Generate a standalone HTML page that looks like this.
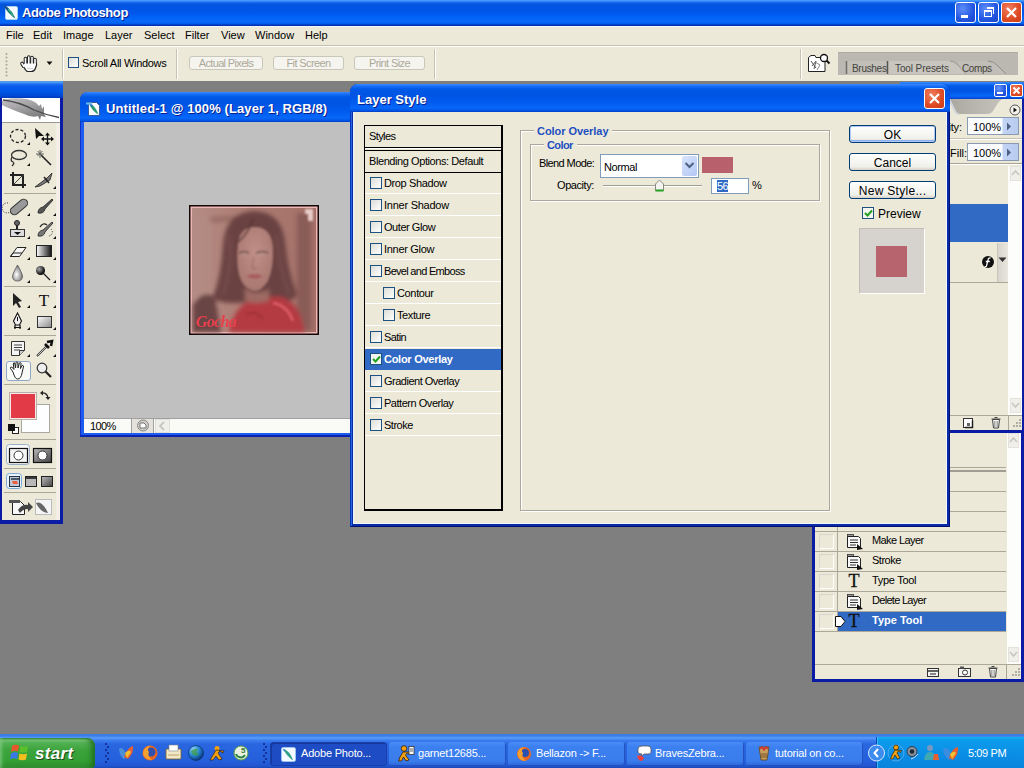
<!DOCTYPE html>
<html><head><meta charset="utf-8">
<style>
*{margin:0;padding:0;box-sizing:border-box}
html,body{width:1024px;height:768px;overflow:hidden;background:#7F7F7F;font-family:"Liberation Sans",sans-serif;font-size:11px;color:#000}
.a{position:absolute}
.t{position:absolute;white-space:nowrap;line-height:13px}
.xpbar{background:linear-gradient(#4AA0FF 0px,#3A90FA 1px,#1A6AEE 2.5px,#0456E0 4px,#0054E3 9px,#0058EE 14px,#0062F8 17px,#0868F8 22px,#0058E8 24px,#0032B0 25px,#0032B0 26px)}
.ttl{position:absolute;white-space:nowrap;color:#fff;font-weight:bold;font-size:13px;text-shadow:1px 1px #0A1E8C;line-height:15px}
.cb{position:absolute;width:12px;height:12px;border:1px solid #1C5180;background:linear-gradient(135deg,#DCDCD7,#FFFFFF)}
.sep{position:absolute;height:1px;background:#ACA899}
.btn{position:absolute;border:1px solid #003C74;border-radius:3px;background:linear-gradient(#FFFFFF,#F0F0EA 80%,#D6D0C5);text-align:center;font-size:12px;line-height:16px;padding-top:1px}
.row{position:absolute;left:365px;width:136px;height:22px;border-bottom:1px solid #FFFFFF}
</style></head><body>

<!-- ============ main title bar ============ -->
<div class="a xpbar" style="left:0;top:0;width:1024px;height:26px"></div>
<div class="ttl" style="left:22px;top:5px;letter-spacing:-0.4px">Adobe Photoshop</div>
<svg class="a" style="left:2px;top:4px" width="17" height="17" viewBox="0 0 17 17">
<rect x="3.5" y="2.5" width="12" height="13" rx="1.5" fill="#F4FAFF" stroke="#A8D0F0"/>
<path d="M1 1 Q6 3 10 8 L13.5 14.5 L11 13 Q5 8 1 1Z" fill="#1A7A6A"/>
<path d="M1 1 Q5 2 7 5 L5 6Z" fill="#1A4A9A"/>
<path d="M6 5 Q9 8 11 12" stroke="#40C090" stroke-width="1" fill="none"/>
</svg>
<div class="a" style="left:955px;top:2px;width:21px;height:21px;border:1px solid #fff;border-radius:3px;background:radial-gradient(circle at 35% 30%,#5E8DF8,#2256E0 60%,#1A45C8)"></div>
<div class="a" style="left:961px;top:15px;width:7px;height:3px;background:#fff"></div>
<div class="a" style="left:978px;top:2px;width:21px;height:21px;border:1px solid #fff;border-radius:3px;background:radial-gradient(circle at 35% 30%,#5E8DF8,#2256E0 60%,#1A45C8)"></div>
<div class="a" style="left:984px;top:10px;width:8px;height:7px;border:1px solid #fff;border-top-width:2px"></div>
<div class="a" style="left:987px;top:7px;width:7px;height:7px;border:1px solid #fff;border-top-width:2px;border-left:none;border-bottom:none"></div>
<div class="a" style="left:1001px;top:2px;width:21px;height:21px;border:1px solid #fff;border-radius:3px;background:radial-gradient(circle at 35% 30%,#F08060,#DD4A22 60%,#C83A18)"></div>
<svg class="a" style="left:1001px;top:2px" width="21" height="21"><path d="M6 6 L15 15 M15 6 L6 15" stroke="#fff" stroke-width="2.2"/></svg>

<!-- ============ menu bar ============ -->
<div class="a" style="left:0;top:26px;width:1024px;height:19px;background:#ECE9D8;border-top:1px solid #F4F4FF"></div>
<div class="a" style="left:0;top:45px;width:1024px;height:1px;background:#C5C2B2"></div>
<div class="t" style="left:6px;top:29px">File</div>
<div class="t" style="left:33px;top:29px">Edit</div>
<div class="t" style="left:63px;top:29px">Image</div>
<div class="t" style="left:105px;top:29px">Layer</div>
<div class="t" style="left:144px;top:29px">Select</div>
<div class="t" style="left:185px;top:29px">Filter</div>
<div class="t" style="left:221px;top:29px">View</div>
<div class="t" style="left:255px;top:29px">Window</div>
<div class="t" style="left:305px;top:29px">Help</div>

<!-- ============ options bar ============ -->
<div class="a" style="left:0;top:46px;width:1024px;height:35px;background:#ECE9D8;border-top:1px solid #FFFFFF"></div>
<!-- grip -->
<svg class="a" style="left:5px;top:52px" width="3" height="26"><g fill="#A8A596"><rect x="0.5" y="1.0" width="2" height="2" rx="1"/><rect x="0.5" y="4.6" width="2" height="2" rx="1"/><rect x="0.5" y="8.2" width="2" height="2" rx="1"/><rect x="0.5" y="11.8" width="2" height="2" rx="1"/><rect x="0.5" y="15.4" width="2" height="2" rx="1"/><rect x="0.5" y="19.0" width="2" height="2" rx="1"/><rect x="0.5" y="22.6" width="2" height="2" rx="1"/></g></svg>
<!-- hand icon -->
<svg class="a" style="left:19px;top:53px" width="21" height="20" viewBox="0 0 21 20">
<g stroke="#222" stroke-linecap="round" fill="none" stroke-width="3.6">
<path d="M6.5 11 L6.5 5.5"/><path d="M9.8 10 L9.8 4"/><path d="M13 10 L13 4.5"/><path d="M16 11 L16 6.5"/><path d="M4.5 13 L3 10.5"/>
</g>
<path d="M4 12 Q4.5 10 6 10 L16.5 10 Q17.8 10 17.5 12 L16.5 15 Q15.5 18.5 12 18.5 L9 18.5 Q6.5 18.5 4 12Z" fill="#FFF" stroke="#222" stroke-width="1.2"/>
<g stroke="#FFF" stroke-linecap="round" fill="none" stroke-width="1.6">
<path d="M6.5 11.5 L6.5 5.5"/><path d="M9.8 11 L9.8 4"/><path d="M13 11 L13 4.5"/><path d="M16 11.5 L16 6.5"/><path d="M5 13.5 L3 10.5"/>
</g>
<path d="M8 15 Q11 17 14 15" stroke="#C8C8C8" fill="none" stroke-width="1"/>
</svg>
<svg class="a" style="left:46px;top:61px" width="8" height="5"><path d="M0.5 0.5 L6.5 0.5 L3.5 4Z" fill="#111"/></svg>
<!-- separators -->
<div class="a" style="left:62px;top:49px;width:1px;height:30px;background:#C5C2B2"></div>
<div class="a" style="left:63px;top:49px;width:1px;height:30px;background:#FFFFFF"></div>
<div class="cb" style="left:68px;top:57px;width:11px;height:11px;border-color:#1C5180;background:linear-gradient(135deg,#DCDCD7,#FFFFFF)"></div>
<div class="t" style="left:82px;top:57px;letter-spacing:-0.3px">Scroll All Windows</div>
<div class="a" style="left:176px;top:49px;width:1px;height:30px;background:#C5C2B2"></div>
<div class="a" style="left:177px;top:49px;width:1px;height:30px;background:#FFFFFF"></div>
<div class="a t" style="left:189px;top:56px;width:74px;height:14px;border:1px solid #C9C7BA;border-radius:3px;background:#F5F4EE;color:#ACA899;text-align:center;line-height:12px;letter-spacing:-0.65px">Actual Pixels</div>
<div class="a t" style="left:273px;top:56px;width:71px;height:14px;border:1px solid #C9C7BA;border-radius:3px;background:#F5F4EE;color:#ACA899;text-align:center;line-height:12px;letter-spacing:-0.6px">Fit Screen</div>
<div class="a t" style="left:354px;top:56px;width:71px;height:14px;border:1px solid #C9C7BA;border-radius:3px;background:#F5F4EE;color:#ACA899;text-align:center;line-height:12px;letter-spacing:-0.6px">Print Size</div>
<div class="a" style="left:434px;top:49px;width:1px;height:30px;background:#C5C2B2"></div>
<div class="a" style="left:435px;top:49px;width:1px;height:30px;background:#FFFFFF"></div>
<div class="a" style="left:800px;top:49px;width:1px;height:30px;background:#C5C2B2"></div>
<div class="a" style="left:801px;top:49px;width:1px;height:30px;background:#FFFFFF"></div>
<!-- file browser icon -->
<svg class="a" style="left:807px;top:52px" width="24" height="22" viewBox="0 0 24 22">
<path d="M1.5 5.5 L4 3.5 L8 3.5 L9 5.5 L18 5.5 L18 19.5 L1.5 19.5Z" fill="#FFF" stroke="#222"/>
<path d="M4 9 L9 16 M5 14 L9 9 L7 17" stroke="#555" fill="none"/><path d="M8 10 L13 13 L10 18" stroke="#888" fill="none"/>
<circle cx="17" cy="6" r="3.5" fill="#fff" stroke="#111" stroke-width="1.3"/><path d="M19.5 8.5 L22.5 11.5" stroke="#111" stroke-width="2"/>
</svg>
<!-- palette well -->
<div class="a" style="left:838px;top:52px;width:180px;height:23px;background:#BAB8B0;border-top:1px solid #AEACA4"></div>
<svg class="a" style="left:838px;top:52px" width="180" height="23" viewBox="0 0 180 23">
<path d="M8 9 L50 9 L50 23 L8 23Z" fill="#C2C0B8"/>
<path d="M8.5 9 L8.5 22" stroke="#6E6C66" stroke-width="1.5"/>
<path d="M120 9 L150 9 Q156 9 160 14 L168 22 L120 22Z" fill="#C0BEB6"/>
<path d="M150 9 Q156 9 160 14 L168 22" stroke="#8E8C86" fill="none"/>
<path d="M50 9 L112 9 Q116 9 120 13 L128 22 L50 22Z" fill="#C8C6BE"/>
<path d="M112 9 Q116 9 120 13 L128 22" stroke="#9A9890" fill="none"/>
<path d="M49.5 9 L49.5 22" stroke="#55534E" stroke-width="1.5"/>
</svg>
<div class="t" style="left:852px;top:62px;color:#45433E;font-size:10px;letter-spacing:-0.3px">Brushes</div>
<div class="t" style="left:895px;top:62px;color:#45433E;font-size:10px;letter-spacing:-0.1px">Tool Presets</div>
<div class="t" style="left:962px;top:62px;color:#45433E;font-size:10px;letter-spacing:-0.4px">Comps</div>

<!-- ============ workspace ============ -->

<!-- ============ toolbox ============ -->
<div class="a" style="left:0;top:81px;width:63px;height:443px;background:#0A1CA4"></div>
<div class="a" style="left:0;top:81px;width:63px;height:17px;background:linear-gradient(#4A8AD0 0px,#58A8FA 1px,#2A7AF4 2.5px,#0A5AEC 5px,#0058E8 10px,#0048D4 15px,#0038B8 17px)"></div>
<div class="a" style="left:2px;top:98px;width:58px;height:422px;background:#ECE9D8"></div>
<div class="a" style="left:2px;top:98px;width:58px;height:24px;background:#FFFFFF"></div>
<svg class="a" style="left:2px;top:98px" width="58" height="25" viewBox="0 0 58 25">
<defs><linearGradient id="fth" x1="0" y1="0" x2="0.6" y2="1"><stop offset="0" stop-color="#C4C4C8"/><stop offset="0.6" stop-color="#9A9A9C"/><stop offset="1" stop-color="#7A7A7C"/></linearGradient></defs>
<path d="M0 3 Q4 -0.5 20 0.5 Q32 1 37 8 L39 6 L40 11 L42 8 L42 16 L44 19 L39 18 L38 22 L36 18 Q30 20 22 16 Q8 11 0 7Z" fill="url(#fth)"/>
<path d="M1 2 Q18 4 32 12 Q44 17 57 19.5" stroke="#4A4A4C" stroke-width="1.3" fill="none"/>
<path d="M4 4 Q10 6 14 9" stroke="#B8A8B8" stroke-width="1.5" fill="none" opacity="0.6"/>
</svg>
<div class="a" style="left:2px;top:122px;width:58px;height:1px;background:#9C9A90"></div>
<div class="a" style="left:56px;top:123px;width:4px;height:397px;background:#F2F0E6"></div>
<div class="sep" style="left:4px;top:193px;width:52px"></div>
<div class="sep" style="left:4px;top:286px;width:52px"></div>
<div class="sep" style="left:4px;top:335px;width:52px"></div>
<div class="sep" style="left:4px;top:384px;width:52px"></div>
<div class="sep" style="left:4px;top:439px;width:52px"></div>
<div class="sep" style="left:4px;top:468px;width:52px"></div>
<div class="sep" style="left:4px;top:492px;width:52px"></div>
<!-- selected hand button -->
<div class="a" style="left:6px;top:361px;width:25px;height:20px;border:1px solid #8FA8C8;border-radius:3px;background:#F8F8F4"></div>
<svg class="a" style="left:0;top:123px" width="60" height="400" viewBox="0 123 60 400">
<g fill="#111">
<path d="M27 145 h3 v-3z"/><path d="M27 166 h3 v-3z"/><path d="M53 189 h3 v-3z"/>
<path d="M27 216 h3 v-3z"/><path d="M53 216 h3 v-3z"/><path d="M27 239 h3 v-3z"/><path d="M53 239 h3 v-3z"/>
<path d="M27 260 h3 v-3z"/><path d="M53 260 h3 v-3z"/><path d="M27 283 h3 v-3z"/><path d="M53 283 h3 v-3z"/>
<path d="M27 308 h3 v-3z"/><path d="M53 308 h3 v-3z"/><path d="M27 330 h3 v-3z"/><path d="M53 330 h3 v-3z"/>
<path d="M27 357 h3 v-3z"/><path d="M53 357 h3 v-3z"/>
</g>
<!-- marquee -->
<ellipse cx="18" cy="136" rx="7.5" ry="6.5" fill="none" stroke="#222" stroke-width="1.3" stroke-dasharray="3 2"/>
<!-- move -->
<path d="M35 128 L44 136 L39 136 L36 139Z" fill="#111"/>
<path d="M47.5 135 v8 M43.5 139 h8" stroke="#111" stroke-width="1.3"/>
<path d="M47.5 132.5 l-2.5 3h5z M47.5 145.5 l-2.5 -3h5z M41 139 l3 -2.5v5z M54 139 l-3 -2.5v5z" fill="#111"/>
<!-- lasso -->
<ellipse cx="19" cy="155" rx="7.5" ry="4.5" fill="none" stroke="#333" stroke-width="1.3"/>
<path d="M12 157 Q10 161 13 162 Q15 163 12 166" stroke="#333" stroke-width="1.3" fill="none"/>
<!-- magic wand -->
<path d="M41 155 L51 165" stroke="#222" stroke-width="1.6"/>
<path d="M40 150 v8 M36 154 h8 M37.5 151 l5 5 M42.5 151 l-5 5" stroke="#555" stroke-width="0.9"/>
<!-- crop -->
<path d="M13 172 v13 h13 M10 175 h13 v13" stroke="#222" stroke-width="2" fill="none"/>
<path d="M14 184 L24 174" stroke="#444" stroke-width="1"/>
<!-- slice -->
<path d="M35 187 L47 178 L52 173 L50 180 L40 186Z" fill="#777" stroke="#222" stroke-width="0.8"/>
<path d="M44 177 L49 183" stroke="#222" stroke-width="1.5"/>
<!-- healing -->
<rect x="9" y="203" width="20" height="8" rx="4" transform="rotate(-40 19 207)" fill="#999" stroke="#333"/>
<path d="M8 203 a5 5 0 1 0 2 9" stroke="#222" stroke-dasharray="1 1.5" fill="none"/>
<!-- brush -->
<path d="M38 213 Q38 208 43 207 L52 199 L53 200 L45 209 Q44 214 38 213Z" fill="#555" stroke="#222" stroke-width="0.8"/>
<!-- stamp -->
<circle cx="17" cy="223" r="2.5" fill="#666" stroke="#222"/><path d="M17 225 v4" stroke="#222" stroke-width="2"/>
<rect x="10.5" y="229.5" width="14" height="7" fill="#DDD" stroke="#333"/><path d="M14 232 h7 l-3.5 3z" fill="#111"/>
<!-- history brush -->
<path d="M38 236 Q38 231 43 230 L52 222 L53 223 L45 232 Q44 237 38 236Z" fill="#777" stroke="#222" stroke-width="0.8"/>
<path d="M40 227 Q43 222 47 225" stroke="#222" stroke-width="1.3" fill="none"/>
<path d="M51 229 a4 4 0 0 1 -3 7" stroke="#222" stroke-dasharray="1 1.5" fill="none"/>
<!-- eraser -->
<path d="M10.5 256.5 L17 247.5 L26 247.5 L19.5 256.5Z" fill="#F8F8F8" stroke="#222"/>
<path d="M10.5 256.5 L13 253 L22 253" stroke="#222" fill="none"/>
<!-- gradient -->
<defs><linearGradient id="gr" x1="0" x2="1"><stop offset="0" stop-color="#fff"/><stop offset="1" stop-color="#111"/></linearGradient>
<radialGradient id="drop" cx="0.4" cy="0.6" r="0.6"><stop offset="0" stop-color="#fff"/><stop offset="1" stop-color="#777"/></radialGradient>
<radialGradient id="ball" cx="0.35" cy="0.35" r="0.65"><stop offset="0" stop-color="#aaa"/><stop offset="1" stop-color="#000"/></radialGradient>
<linearGradient id="rg" x1="0" y1="0" x2="1" y2="1"><stop offset="0" stop-color="#fff"/><stop offset="1" stop-color="#888"/></linearGradient>
<linearGradient id="qm" x1="0" y1="0" x2="1" y2="1"><stop offset="0" stop-color="#BBB"/><stop offset="1" stop-color="#444"/></linearGradient>
</defs>
<rect x="36.5" y="245.5" width="15" height="11" fill="url(#gr)" stroke="#222"/>
<!-- blur drop -->
<path d="M17.5 265 Q13 273 12.5 276 Q12.5 281 17.5 281 Q22.5 281 22.5 276 Q22 273 17.5 265Z" fill="url(#drop)" stroke="#555" stroke-width="0.8"/>
<!-- dodge/burn -->
<circle cx="40.5" cy="270.5" r="4.5" fill="url(#ball)"/><path d="M43 273 L50 280" stroke="#222" stroke-width="1.3"/>
<!-- path select -->
<path d="M13 293 L13 306 L16 303 L19 308 L21 307 L18 302 L22 301Z" fill="#222"/>
<!-- type -->
<text x="44" y="306" font-family="Liberation Serif" font-size="17" text-anchor="middle" fill="#111">T</text>
<!-- pen -->
<path d="M17.5 313 L21.5 321 L19.5 325 L15.5 325 L13.5 321Z" fill="#F0F0F0" stroke="#111" stroke-width="1.1"/><path d="M17.5 317 v4" stroke="#111"/><path d="M15 325 v4 M20 325 v4 M14 327.5 h7" stroke="#111" stroke-width="1.2"/>
<!-- rectangle -->
<rect x="37.5" y="316.5" width="14" height="11" fill="url(#rg)" stroke="#333"/>
<!-- notes -->
<path d="M11.5 341.5 h13 v9 l-5 5 h-8Z" fill="#F4F4F4" stroke="#333"/><path d="M14 345 h8 M14 347.5 h8 M14 350 h6" stroke="#444"/><path d="M19.5 355.5 v-5 h5" fill="#ccc" stroke="#333"/>
<!-- eyedropper -->
<path d="M37 356 L47 346" stroke="#333" stroke-width="2"/><path d="M37.5 355.5 L46 347" stroke="#fff" stroke-width="0.7"/>
<path d="M45 344 L49 348 M47 342 L52 341 L51 346" stroke="#111" stroke-width="2.5" fill="none"/>
<!-- hand -->
<path d="M13 372 L10.5 368.5 Q10 366.8 11.8 367 L14 369.5 L13.3 364 Q13.3 362.6 14.6 362.8 L15.6 368 L16 362.4 Q16.7 361.2 17.8 362.4 L18 368 L19.3 363 Q20.3 362.2 21.1 363.2 L20.4 368.6 L22 365.5 Q23 364.9 23.6 366 L22 373 Q21 379 17.5 379 Q15 379 13 372Z" fill="#FFF" stroke="#222"/>
<!-- zoom -->
<circle cx="42" cy="368" r="4.8" fill="#EEE" stroke="#333" stroke-width="1.2"/><path d="M45.5 371.5 L51 377" stroke="#222" stroke-width="2.2"/>
<!-- colors -->
<rect x="21.5" y="404.5" width="28" height="28" fill="#FDFEFF" stroke="#A8A8A0"/>
<rect x="9.5" y="392.5" width="27" height="27" fill="#F8E8E8" stroke="#B8B0A8"/>
<rect x="11" y="394" width="24" height="24" fill="#E33A48"/>
<path d="M41 393 Q47 392 48 398" stroke="#222" stroke-width="1.3" fill="none"/><path d="M40 393 l3 -2.5v5z M48 400 l-2.5 -3h5z" fill="#222"/>
<rect x="12.5" y="427.5" width="6" height="6" fill="#fff" stroke="#222"/><rect x="8" y="424" width="7" height="7" fill="#111"/>
<!-- quick mask -->
<rect x="6.5" y="444.5" width="23" height="20" rx="3" fill="#F8F8F8" stroke="#9AB0C8"/>
<rect x="9.5" y="448.5" width="18" height="14" fill="#F4F4F4" stroke="#111" stroke-width="1.2"/><circle cx="18.5" cy="455.5" r="4.5" fill="#fff" stroke="#333"/>
<rect x="33.5" y="448.5" width="18" height="14" fill="url(#qm)" stroke="#111" stroke-width="1.2"/><circle cx="42.5" cy="455.5" r="4.5" fill="#fff" stroke="#333"/>
<!-- screen modes -->
<rect x="6.5" y="473.5" width="15" height="15" rx="3" fill="#EAF2FA" stroke="#7AA8D8"/>
<rect x="9.5" y="476.5" width="10" height="10" fill="#C0C8D8" stroke="#234"/><path d="M11 479 h8" stroke="#234" stroke-width="1.5"/><path d="M12 481 h5 l1 3 h-5z" fill="#E86040"/>
<rect x="25.5" y="476.5" width="11" height="10" fill="#B8B8B8" stroke="#222"/><path d="M26 478 h10" stroke="#111" stroke-width="1.5"/>
<rect x="41.5" y="476.5" width="11" height="10" fill="url(#qm)" stroke="#222"/>
<!-- jump -->
<path d="M12.5 501.5 h8 l4 4 v9 h-12Z" fill="#F8F8F8" stroke="#222"/><rect x="9" y="500" width="11" height="3" fill="#555"/>
<path d="M18 510 Q22 504 28 505 L28 502 L33 507 L28 512 L28 509 Q23 509 20 513Z" fill="#444"/>
<rect x="35.5" y="499.5" width="16" height="15" fill="#F4F4F4" stroke="#BBB"/>
<path d="M36 503 Q42 500 48 513 Q40 512 36 503Z" fill="#666"/>
</svg>

<!-- ============ document window ============ -->
<div class="a" style="left:80px;top:92px;width:275px;height:345px;border-radius:8px 8px 0 0;background:#1E5CF0;border-left:1px solid #1030C8;border-bottom:2px solid #0A24B0"></div>
<div class="a" style="left:80px;top:92px;width:275px;height:30px;border-radius:8px 8px 0 0;background:linear-gradient(#3A8CFF 0px,#1A70F8 2px,#0058E6 5px,#0054E3 12px,#005CF0 20px,#0868F8 26px,#0050E0 29px,#0038C0 30px)"></div>
<div class="a" style="left:84px;top:122px;width:271px;height:296px;background:#C0C0C0"></div>
<div class="a" style="left:84px;top:418px;width:271px;height:15px;background:#FAFAF6;border-top:1px solid #A0A0A0"></div>
<div class="a" style="left:131px;top:418px;width:23px;height:15px;background:#E4E2DA;border-left:1px solid #A0A0A0;border-right:1px solid #A0A0A0;border-top:1px solid #A0A0A0"></div>
<svg class="a" style="left:136px;top:419px" width="14" height="13"><circle cx="7" cy="6.5" r="5.5" fill="#D0D0C8" stroke="#888"/><path d="M4 4 h4 l2 2 v3 h-6z" fill="#fff" stroke="#555" stroke-width="0.8"/></svg>
<div class="a" style="left:155px;top:419px;width:15px;height:14px;background:#F0F0EA;border:1px solid #E0E0D8"></div>
<svg class="a" style="left:158px;top:421px" width="9" height="10"><path d="M6 1 L2 5 L6 9" stroke="#C8C8C0" stroke-width="2" fill="none"/></svg>
<div class="t" style="left:90px;top:420px;letter-spacing:-0.6px">100%</div>
<div class="ttl" style="left:106px;top:101px;letter-spacing:0.1px">Untitled-1 @ 100% (Layer 1, RGB/8)</div>
<svg class="a" style="left:86px;top:100px" width="16" height="16" viewBox="0 0 16 16">
<path d="M2.5 2.5 h8 l3 3 v10 h-11z" fill="#F8FCFF" stroke="#2A4A80" stroke-width="0.8"/>
<path d="M3 3 Q8 5 11 11 L12.5 14.5 L10 13 Q5 9 3 3Z" fill="#2A9A70"/><path d="M3 3 Q6 4 7 6 L5 7Z" fill="#2A78C8"/>
<path d="M0 3.5 h6" stroke="#6AB8F0" stroke-width="2"/>
</svg>
<!-- photo -->
<svg class="a" style="left:189px;top:205px" width="130" height="130" viewBox="0 0 130 130">
<defs>
<filter id="bl" x="-20%" y="-20%" width="140%" height="140%"><feGaussianBlur stdDeviation="2"/></filter>
<filter id="bl2" x="-20%" y="-20%" width="140%" height="140%"><feGaussianBlur stdDeviation="0.9"/></filter>
<linearGradient id="bgp" x1="0" x2="1"><stop offset="0" stop-color="#B48C84"/><stop offset="0.45" stop-color="#AC7C72"/><stop offset="1" stop-color="#A47068"/></linearGradient>
<radialGradient id="face" cx="0.5" cy="0.4" r="0.6"><stop offset="0" stop-color="#C09088"/><stop offset="1" stop-color="#A87870"/></radialGradient>
</defs>
<rect x="0" y="0" width="130" height="130" fill="#140808"/>
<rect x="1.5" y="1.5" width="127" height="127" fill="#F0B8B8"/>
<rect x="3" y="3" width="124" height="124" fill="url(#bgp)"/>
<g filter="url(#bl)">
<path d="M8 10 v110 M14 10 v110 M20 10 v110" stroke="#B89890" stroke-width="2" opacity="0.5"/>
<path d="M108 8 L122 8 L122 125 L108 125Z" fill="#8A5C56"/>
<path d="M20 12 L55 10 L45 16 L22 18Z" fill="#8A6058" opacity="0.6"/>
<path d="M34 40 Q36 8 64 6 Q92 6 96 36 Q98 62 108 90 Q100 100 88 96 L46 98 Q28 98 24 92 Q32 72 34 40Z" fill="#6A4242"/><path d="M40 30 Q44 60 34 90 M88 30 Q90 60 100 90" stroke="#805454" stroke-width="3" fill="none" opacity="0.6"/>
<path d="M4 100 Q14 84 26 92 L32 127 L4 127Z" fill="#6A4444"/>
<path d="M40 127 Q44 104 60 96 Q78 90 92 92 Q106 96 112 112 L116 127Z" fill="#B43A42"/>
<path d="M56 82 Q66 92 80 84 L80 96 Q66 100 56 96Z" fill="#9E6A64"/>
</g>
<g filter="url(#bl2)">
<path d="M49 38 Q51 22 66 22 Q82 22 84 42 Q85 62 79 76 Q72 87 65 86 Q54 84 50 70 Q47 56 49 38Z" fill="url(#face)"/>
<path d="M50 48 Q55 45 60 48 M67 48 Q73 45 79 48" stroke="#6E4A48" stroke-width="1.6" fill="none"/>
<path d="M52 50 Q55 51 58 50 M69 50 Q73 51 77 50" stroke="#B89C98" stroke-width="0.8" fill="none"/>
<path d="M65 52 L63 63 Q65 65 68 63" stroke="#946460" stroke-width="1" fill="none"/>
<path d="M57 71 Q65 67 74 71 Q66 77 57 71Z" fill="#A85C5A"/>
<path d="M64 14 Q60 28 48 38" stroke="#553434" stroke-width="2" fill="none" opacity="0.7"/>
<path d="M84 98 Q98 100 104 116" stroke="#D85A62" stroke-width="3" fill="none"/>
<path d="M58 110 Q66 104 74 114" stroke="#A03038" stroke-width="2.5" fill="none" opacity="0.7"/>
<path d="M116 4 L124 4 L124 16 L119 16 L119 9 L116 9Z" fill="#E8CCC8"/>
</g>
<text x="7" y="122" font-family="Liberation Serif" font-style="italic" font-weight="bold" font-size="17" fill="#E8404C" letter-spacing="-0.8" transform="translate(7 0) scale(0.95 1) translate(-7 0)">Gocha</text>
</svg>

<!-- ============ layers panel (behind dialog) ============ -->
<div class="a" style="left:900px;top:82px;width:124px;height:351px;background:#0A1CA4"></div>
<div class="a" style="left:900px;top:82px;width:124px;height:17px;background:linear-gradient(#3A8CFF 0px,#1A70F8 2px,#0058E6 4px,#0054E3 9px,#0868F8 14px,#0050E0 16px,#0040C8 17px)"></div>
<div class="a" style="left:903px;top:99px;width:119px;height:331px;background:#ECE9D8"></div>
<div class="a" style="left:994px;top:84px;width:13px;height:13px;border:1px solid #fff;border-radius:2px;background:radial-gradient(circle at 35% 30%,#6A98FA,#2256E0 60%,#1A45C8)"></div>
<div class="a" style="left:997px;top:92px;width:6px;height:2px;background:#fff"></div>
<div class="a" style="left:1010px;top:84px;width:13px;height:13px;border:1px solid #fff;border-radius:2px;background:radial-gradient(circle at 35% 30%,#F08060,#DD4A22 60%,#C83A18)"></div>
<svg class="a" style="left:1010px;top:84px" width="13" height="13"><path d="M3.5 3.5 L9.5 9.5 M9.5 3.5 L3.5 9.5" stroke="#fff" stroke-width="1.8"/></svg>
<!-- tab strip -->
<div class="a" style="left:903px;top:99px;width:119px;height:17px;background:#ECE9D8"></div>
<svg class="a" style="left:903px;top:99px" width="119" height="17" viewBox="0 0 119 17">
<defs><linearGradient id="tabg" x1="0" x2="1"><stop offset="0" stop-color="#A8A69E"/><stop offset="0.6" stop-color="#BAB8B0"/><stop offset="1" stop-color="#C4C2BA"/></linearGradient></defs>
<path d="M44 0 L100 0 Q97 1 95 4 L90 12 Q88 15 84 15 L56 15 Q53 15 52 12 L48 3 Q47 0 44 0Z" fill="url(#tabg)"/>
<path d="M46 0 L52 12 Q53 15 56 15" stroke="#D0D4DC" stroke-width="2" fill="none"/>
</svg>
<svg class="a" style="left:1009px;top:104px" width="12" height="12"><circle cx="6" cy="6" r="5" fill="#F4F2EA" stroke="#555"/><path d="M4.5 3.5 L8 6 L4.5 8.5Z" fill="#111"/></svg>
<div class="t" style="left:923px;top:121px;letter-spacing:-0.2px">Opacity:</div>
<div class="a" style="left:967px;top:117px;width:52px;height:18px;border:1px solid #8A9AB0;background:linear-gradient(90deg,#FBFCFF 0,#FBFCFF 34px,#C4D4F4 35px,#B8CCF0 100%)"></div>
<div class="t" style="left:973px;top:121px">100%</div>
<svg class="a" style="left:1006px;top:122px" width="6" height="9"><path d="M1 0.5 L5 4.5 L1 8.5Z" fill="#4D6185"/></svg>
<div class="a" style="left:903px;top:138px;width:119px;height:1px;background:#C5C2B2"></div>
<div class="a" style="left:903px;top:139px;width:119px;height:1px;background:#FFF"></div>
<div class="t" style="left:950px;top:147px">Fill:</div>
<div class="a" style="left:967px;top:143px;width:52px;height:18px;border:1px solid #8A9AB0;background:linear-gradient(90deg,#FBFCFF 0,#FBFCFF 34px,#C4D4F4 35px,#B8CCF0 100%)"></div>
<div class="t" style="left:973px;top:147px">100%</div>
<svg class="a" style="left:1006px;top:148px" width="6" height="9"><path d="M1 0.5 L5 4.5 L1 8.5Z" fill="#4D6185"/></svg>
<div class="a" style="left:903px;top:163px;width:119px;height:1px;background:#A8A598"></div>
<div class="a" style="left:903px;top:164px;width:119px;height:1px;background:#FFF"></div>
<!-- scrollbar -->
<div class="a" style="left:1008px;top:166px;width:14px;height:249px;background:#FDFDFB"></div>
<div class="a" style="left:1010px;top:166px;width:11px;height:15px;background:#F0EFEA;border:1px solid #E4E2DA"></div>
<svg class="a" style="left:1011px;top:169px" width="9" height="8"><path d="M1 6 L4.5 2 L8 6" stroke="#C8C6BE" stroke-width="1.6" fill="none"/></svg>
<div class="a" style="left:1010px;top:398px;width:11px;height:15px;background:#F0EFEA;border:1px solid #E4E2DA"></div>
<svg class="a" style="left:1011px;top:401px" width="9" height="8"><path d="M1 2 L4.5 6 L8 2" stroke="#C8C6BE" stroke-width="1.6" fill="none"/></svg>
<div class="a" style="left:903px;top:204px;width:105px;height:38px;background:#316AC5"></div>
<div class="a" style="left:903px;top:282px;width:105px;height:1px;background:#ACA899"></div>
<div class="a" style="left:997px;top:243px;width:11px;height:39px;background:linear-gradient(90deg,#D8D6CC,#E8E6DE);border-left:1px solid #C8C6BC"></div>
<svg class="a" style="left:998px;top:257px" width="9" height="6"><path d="M0.5 0.5 L8.5 0.5 L4.5 5Z" fill="#333"/></svg>
<svg class="a" style="left:981px;top:255px" width="14" height="14"><circle cx="7" cy="7" r="6" fill="#111"/><path d="M9.5 3 Q7.5 2.5 7 5 L5.5 11 Q5 12 3.5 11.5 M4.8 6.5 h4" stroke="#fff" stroke-width="1.3" fill="none"/></svg>
<!-- bottom toolbar -->
<div class="a" style="left:903px;top:415px;width:119px;height:1px;background:#ACA899"></div>
<div class="a" style="left:1008px;top:416px;width:1px;height:14px;background:#ACA899"></div>
<svg class="a" style="left:962px;top:417px" width="13" height="12"><rect x="1.5" y="1.5" width="9" height="9" fill="#fff" stroke="#333"/><path d="M3 10.5 h7.5 v-7" stroke="#222" stroke-width="1.5" fill="none"/><rect x="5" y="6" width="3" height="3" fill="#666"/></svg>
<svg class="a" style="left:990px;top:416px" width="12" height="13"><path d="M2.5 3.5 h7 l-1 8.5 h-5z" fill="#F4F4F0" stroke="#444"/><path d="M1.5 3 h9 M4.5 1.5 h3" stroke="#444"/><path d="M4.5 5 v6 M6 5 v6 M7.5 5 v6" stroke="#888" stroke-width="0.7"/></svg>
<svg class="a" style="left:1011px;top:418px" width="11" height="11"><g fill="#B0AEA4"><rect x="8" y="1" width="2" height="2"/><rect x="5" y="4" width="2" height="2"/><rect x="8" y="4" width="2" height="2"/><rect x="2" y="7" width="2" height="2"/><rect x="5" y="7" width="2" height="2"/><rect x="8" y="7" width="2" height="2"/></g></svg>

<!-- ============ history panel (behind dialog) ============ -->
<div class="a" style="left:812px;top:430px;width:212px;height:252px;background:#0A1CA4"></div>
<div class="a" style="left:815px;top:433px;width:206px;height:246px;background:#ECE9D8"></div>
<div class="a" style="left:1007px;top:433px;width:14px;height:232px;background:#FDFDFB"></div>
<div class="a" style="left:1008px;top:433px;width:11px;height:15px;background:#F0EFEA;border:1px solid #E4E2DA"></div>
<svg class="a" style="left:1009px;top:436px" width="9" height="8"><path d="M1 6 L4.5 2 L8 6" stroke="#C8C6BE" stroke-width="1.6" fill="none"/></svg>
<div class="a" style="left:1008px;top:647px;width:11px;height:15px;background:#F0EFEA;border:1px solid #E4E2DA"></div>
<svg class="a" style="left:1009px;top:650px" width="9" height="8"><path d="M1 2 L4.5 6 L8 2" stroke="#C8C6BE" stroke-width="1.6" fill="none"/></svg>
<div class="a" style="left:815px;top:467px;width:191px;height:1px;background:#ACA899"></div>
<div class="a" style="left:815px;top:470px;width:191px;height:2px;background:#A09E94"></div>
<div class="a" style="left:815px;top:491px;width:191px;height:1px;background:#ACA899"></div>
<div class="a" style="left:815px;top:511px;width:191px;height:1px;background:#ACA899"></div>
<div class="a" style="left:815px;top:531px;width:191px;height:1px;background:#ACA899"></div>
<div class="a" style="left:815px;top:551px;width:191px;height:1px;background:#ACA899"></div>
<div class="a" style="left:815px;top:571px;width:191px;height:1px;background:#ACA899"></div>
<div class="a" style="left:815px;top:591px;width:191px;height:1px;background:#ACA899"></div>
<div class="a" style="left:815px;top:611px;width:191px;height:1px;background:#ACA899"></div>
<div class="a" style="left:815px;top:631px;width:191px;height:1px;background:#ACA899"></div>
<div class="a" style="left:837px;top:472px;width:1px;height:160px;background:#ACA899"></div>
<div class="a" style="left:838px;top:612px;width:168px;height:19px;background:#316AC5"></div>
<div class="a" style="left:819px;top:534px;width:15px;height:15px;border:1px solid #D8D6CC;border-right-color:#fff;border-bottom-color:#fff"></div>
<div class="a" style="left:819px;top:554px;width:15px;height:15px;border:1px solid #D8D6CC;border-right-color:#fff;border-bottom-color:#fff"></div>
<div class="a" style="left:819px;top:574px;width:15px;height:15px;border:1px solid #D8D6CC;border-right-color:#fff;border-bottom-color:#fff"></div>
<div class="a" style="left:819px;top:594px;width:15px;height:15px;border:1px solid #D8D6CC;border-right-color:#fff;border-bottom-color:#fff"></div>
<div class="a" style="left:819px;top:614px;width:15px;height:15px;border:1px solid #D8D6CC;border-right-color:#fff;border-bottom-color:#fff"></div>
<svg class="a" style="left:845px;top:532px" width="20" height="100" viewBox="0 0 20 100">
<defs><g id="act"><rect x="2.5" y="2.5" width="6" height="3" fill="#999" stroke="#333" stroke-width="0.8"/><path d="M2.5 4.5 h11 l2 2 v9 h-13z" fill="#F8F8F8" stroke="#222"/><path d="M5 8 h8 M5 10.5 h8 M5 13 h6" stroke="#333"/><path d="M12 12 L18 17 L12 18Z" fill="#111"/></g></defs>
<use href="#act" y="0"/><use href="#act" y="20"/><use href="#act" y="60"/>
<text x="9" y="55" font-family="Liberation Serif" font-size="18" text-anchor="middle" fill="#111" stroke="#111" stroke-width="0.3">T</text>
<text x="9" y="95" font-family="Liberation Serif" font-size="18" text-anchor="middle" fill="#111" stroke="#111" stroke-width="0.3">T</text>
</svg>
<svg class="a" style="left:835px;top:616px" width="11" height="11"><path d="M0.5 0.5 L6 0.5 L10 5.5 L6 10.5 L0.5 10.5Z" fill="#fff" stroke="#111"/></svg>
<div class="t" style="left:872px;top:534px;letter-spacing:-0.6px">Make Layer</div>
<div class="t" style="left:872px;top:554px;letter-spacing:-0.5px">Stroke</div>
<div class="t" style="left:872px;top:574px;letter-spacing:-0.3px">Type Tool</div>
<div class="t" style="left:872px;top:594px;letter-spacing:-0.7px">Delete Layer</div>
<div class="t" style="left:872px;top:614px;color:#fff;font-weight:bold">Type Tool</div>
<div class="a" style="left:815px;top:664px;width:206px;height:1px;background:#ACA899"></div>
<div class="a" style="left:1006px;top:665px;width:1px;height:14px;background:#ACA899"></div>
<svg class="a" style="left:926px;top:666px" width="14" height="12"><rect x="1.5" y="2.5" width="11" height="8" fill="#F4F4F0" stroke="#333"/><path d="M1.5 5 h11" stroke="#333" stroke-width="1.5"/><rect x="4" y="7" width="6" height="2" fill="#888"/></svg>
<svg class="a" style="left:957px;top:665px" width="15" height="13"><rect x="1.5" y="3.5" width="12" height="8" fill="#F4F4F0" stroke="#333"/><rect x="3" y="1.5" width="4" height="2" fill="#555"/><circle cx="8" cy="7.5" r="2.5" fill="#fff" stroke="#333"/></svg>
<svg class="a" style="left:987px;top:665px" width="12" height="13"><path d="M2.5 3.5 h7 l-1 8.5 h-5z" fill="#F4F4F0" stroke="#444"/><path d="M1.5 3 h9 M4.5 1.5 h3" stroke="#444"/><path d="M4.5 5 v6 M6 5 v6 M7.5 5 v6" stroke="#888" stroke-width="0.7"/></svg>
<svg class="a" style="left:1010px;top:667px" width="11" height="11"><g fill="#B0AEA4"><rect x="8" y="1" width="2" height="2"/><rect x="5" y="4" width="2" height="2"/><rect x="8" y="4" width="2" height="2"/><rect x="2" y="7" width="2" height="2"/><rect x="5" y="7" width="2" height="2"/><rect x="8" y="7" width="2" height="2"/></g></svg>

<!-- ============ layer style dialog ============ -->
<div class="a" style="left:350px;top:84px;width:600px;height:443px;border-radius:8px 8px 0 0;background:#0A2AA8;border-left:1px solid #0038B8;border-right:1px solid #001478;border-bottom:1px solid #001070;box-shadow:inset 1px 0 #2A62E0"></div>
<div class="a" style="left:350px;top:84px;width:600px;height:28px;border-radius:8px 8px 0 0;background:linear-gradient(#3A8CFF 0px,#1A70F8 2px,#0058E6 5px,#0054E3 12px,#005CF0 19px,#0868F8 24px,#0050E0 27px,#0038C0 28px)"></div>
<div class="a" style="left:353px;top:112px;width:594px;height:412px;background:#ECE9D8;box-shadow:inset 1px 0 #E8F6FF,inset -1px 0 #F0F8FF,inset 0 -1px #F0F8FF"></div>
<div class="ttl" style="left:357px;top:92px">Layer Style</div>
<div class="a" style="left:924px;top:88px;width:21px;height:21px;border:1px solid #fff;border-radius:3px;background:radial-gradient(circle at 35% 30%,#F08060,#DD4A22 60%,#C83A18)"></div>
<svg class="a" style="left:924px;top:88px" width="21" height="21"><path d="M6 6 L15 15 M15 6 L6 15" stroke="#fff" stroke-width="2.2"/></svg>

<!-- style list -->
<div class="a" style="left:364px;top:125px;width:139px;height:386px;border:1px solid #000;border-width:1px 2px 2px 1px;background:#ECE9D8"></div>
<div class="a" style="left:365px;top:147px;width:136px;height:1px;background:#000"></div>
<div class="a" style="left:365px;top:148px;width:136px;height:1px;background:#FFF"></div>
<div class="a" style="left:365px;top:150px;width:136px;height:1px;background:#000"></div>
<div class="a" style="left:365px;top:172px;width:136px;height:1px;background:#000"></div>
<div class="t" style="left:369px;top:130px;letter-spacing:-0.6px">Styles</div>
<div class="t" style="left:369px;top:155px;letter-spacing:-0.42px">Blending Options: Default</div>
<div class="a" style="left:365px;top:193px;width:136px;height:1px;background:#FFF"></div>
<div class="a" style="left:365px;top:215px;width:136px;height:1px;background:#FFF"></div>
<div class="a" style="left:365px;top:237px;width:136px;height:1px;background:#FFF"></div>
<div class="a" style="left:365px;top:259px;width:136px;height:1px;background:#FFF"></div>
<div class="a" style="left:365px;top:281px;width:136px;height:1px;background:#FFF"></div>
<div class="a" style="left:365px;top:303px;width:136px;height:1px;background:#FFF"></div>
<div class="a" style="left:365px;top:325px;width:136px;height:1px;background:#FFF"></div>
<div class="a" style="left:365px;top:347px;width:136px;height:1px;background:#FFF"></div>
<div class="a" style="left:365px;top:391px;width:136px;height:1px;background:#FFF"></div>
<div class="a" style="left:365px;top:413px;width:136px;height:1px;background:#FFF"></div>
<div class="a" style="left:365px;top:435px;width:136px;height:1px;background:#FFF"></div>
<div class="a" style="left:365px;top:349px;width:136px;height:21px;background:#316AC5"></div>
<div class="cb" style="left:370px;top:177px"></div><div class="t" style="left:384px;top:177px;letter-spacing:-0.38px">Drop Shadow</div>
<div class="cb" style="left:370px;top:199px"></div><div class="t" style="left:384px;top:199px;letter-spacing:-0.25px">Inner Shadow</div>
<div class="cb" style="left:370px;top:221px"></div><div class="t" style="left:384px;top:221px;letter-spacing:-0.45px">Outer Glow</div>
<div class="cb" style="left:370px;top:243px"></div><div class="t" style="left:384px;top:243px;letter-spacing:-0.3px">Inner Glow</div>
<div class="cb" style="left:370px;top:265px"></div><div class="t" style="left:384px;top:265px;letter-spacing:-0.7px">Bevel and Emboss</div>
<div class="cb" style="left:383px;top:287px"></div><div class="t" style="left:397px;top:287px;letter-spacing:-0.35px">Contour</div>
<div class="cb" style="left:383px;top:309px"></div><div class="t" style="left:397px;top:309px;letter-spacing:-0.4px">Texture</div>
<div class="cb" style="left:370px;top:331px"></div><div class="t" style="left:384px;top:331px;letter-spacing:-0.6px">Satin</div>
<div class="cb" style="left:370px;top:353px;background:#F4F4F0"></div>
<svg class="a" style="left:370px;top:353px" width="13" height="13"><path d="M3 6 L5.5 8.5 L10 3.5" stroke="#21A121" stroke-width="2" fill="none"/></svg>
<div class="t" style="left:384px;top:353px;color:#fff;font-weight:bold;letter-spacing:-0.27px">Color Overlay</div>
<div class="cb" style="left:370px;top:375px"></div><div class="t" style="left:384px;top:375px;letter-spacing:-0.5px">Gradient Overlay</div>
<div class="cb" style="left:370px;top:397px"></div><div class="t" style="left:384px;top:397px;letter-spacing:-0.47px">Pattern Overlay</div>
<div class="cb" style="left:370px;top:419px"></div><div class="t" style="left:384px;top:419px;letter-spacing:-0.5px">Stroke</div>

<!-- group boxes -->
<div class="a" style="left:520px;top:130px;width:310px;height:381px;border:1px solid #ACA899;box-shadow:inset 1px 1px #fff,1px 1px #fff"></div>
<div class="a" style="left:530px;top:144px;width:290px;height:57px;border:1px solid #ACA899;box-shadow:inset 1px 1px #fff,1px 1px #fff"></div>
<div class="a" style="left:534px;top:124px;width:78px;height:14px;background:#ECE9D8"></div>
<div class="t" style="left:537px;top:125px;color:#1E4FC0;font-weight:bold;letter-spacing:-0.05px">Color Overlay</div>
<div class="a" style="left:544px;top:138px;width:33px;height:14px;background:#ECE9D8"></div>
<div class="t" style="left:547px;top:139px;color:#1E4FC0;font-weight:bold;letter-spacing:-0.6px">Color</div>
<div class="t" style="left:539px;top:157px;letter-spacing:-0.6px">Blend Mode:</div>
<div class="t" style="left:557px;top:179px;letter-spacing:-0.43px">Opacity:</div>
<div class="a" style="left:600px;top:154px;width:99px;height:24px;border:1px solid #7F9DB9;background:#fff"></div>
<div class="t" style="left:604px;top:161px;letter-spacing:-0.4px">Normal</div>
<div class="a" style="left:682px;top:156px;width:15px;height:20px;border-radius:2px;background:linear-gradient(135deg,#D8E4FC,#B4C8F4)"></div>
<svg class="a" style="left:684px;top:161px" width="11" height="9"><path d="M1.5 2 L5.5 6 L9.5 2" stroke="#4D6185" stroke-width="2" fill="none"/></svg>
<div class="a" style="left:702px;top:157px;width:31px;height:16px;background:#B8606C"></div>
<div class="a" style="left:603px;top:185px;width:99px;height:2px;border-top:1px solid #A0A090;border-bottom:1px solid #fff"></div>
<svg class="a" style="left:654px;top:179px" width="11" height="13"><path d="M1.5 5 L5.5 1 L9.5 5 L9.5 11.5 L1.5 11.5Z" fill="#F4F4F0" stroke="#8A8A80"/><path d="M1.5 11.5 h8" stroke="#21A121" stroke-width="2"/></svg>
<div class="a" style="left:711px;top:178px;width:38px;height:16px;border:1px solid #7F9DB9;background:#fff"></div>
<div class="a" style="left:717px;top:180px;width:11px;height:12px;background:#316AC5"></div>
<div class="t" style="left:717px;top:180px;color:#fff;letter-spacing:-0.6px">56</div>
<div class="t" style="left:752px;top:179px">%</div>

<!-- buttons -->
<div class="btn" style="left:849px;top:125px;width:87px;height:18px;box-shadow:inset 0 0 0 1px #B0C8F4,inset 0 -2px #8AAEF0">OK</div>
<div class="btn" style="left:849px;top:153px;width:87px;height:18px">Cancel</div>
<div class="btn" style="left:849px;top:181px;width:87px;height:18px;letter-spacing:0.3px">New Style...</div>
<div class="cb" style="left:862px;top:207px;background:#F4F4F0"></div>
<svg class="a" style="left:862px;top:207px" width="13" height="13"><path d="M3 6 L5.5 8.5 L10 3.5" stroke="#21A121" stroke-width="2" fill="none"/></svg>
<div class="t" style="left:878px;top:208px;font-size:12px">Preview</div>
<div class="a" style="left:859px;top:228px;width:66px;height:66px;background:#D6D3CE;border:1px solid #C0BDB5;border-right-color:#fff;border-bottom-color:#fff"></div>
<div class="a" style="left:876px;top:246px;width:31px;height:31px;background:#B8646E"></div>

<!-- ============ taskbar ============ -->
<div class="a" style="left:0;top:734px;width:1024px;height:34px;background:linear-gradient(#3D7BE0 0px,#3A80E8 2px,#5C9CF8 4px,#3C80F0 6px,#2A66E0 10px,#2560DC 26px,#2256D0 32px,#1A48B8 34px)"></div>
<div class="a" style="left:0;top:738px;width:95px;height:30px;border-radius:0 8px 4px 0;background:linear-gradient(#2E7E2E 0px,#78C878 2px,#52B052 5px,#3CA43C 12px,#35A035 22px,#2E902E 30px);box-shadow:inset -5px 0 6px -2px #1E6A1E,inset 3px 0 4px -2px #8AD08A"></div>
<svg class="a" style="left:10px;top:743px" width="20" height="19" viewBox="0 0 20 19">
<path d="M2 3 Q5 1 9 2.5 L8 8.5 Q4.5 7 1 9Z" fill="#E8582A"/>
<path d="M10.5 3 Q14 4.5 18 3 L17 9 Q13.5 10.5 9.5 9Z" fill="#5CC02A"/>
<path d="M1 10.5 Q4.5 8.5 8 10 L7 16 Q3.5 14.5 0 16.5Z" fill="#3A78E8"/>
<path d="M9.5 10.5 Q13.5 12 17 10.5 L16 16.5 Q12.5 18 8.5 16.5Z" fill="#F4C020"/>
</svg>
<div class="t" style="left:35px;top:744px;color:#fff;font-size:17px;font-weight:bold;font-style:italic;line-height:20px;text-shadow:1px 1px #1A4A1A;letter-spacing:0.3px">start</div>
<!-- quick launch -->
<svg class="a" style="left:104px;top:742px" width="6" height="24"><g fill="#16329A"><rect x="1" y="1" width="2" height="2"/><rect x="3" y="4" width="2" height="2"/><rect x="1" y="7" width="2" height="2"/><rect x="3" y="10" width="2" height="2"/><rect x="1" y="13" width="2" height="2"/><rect x="3" y="16" width="2" height="2"/><rect x="1" y="19" width="2" height="2"/></g></svg>
<svg class="a" style="left:116px;top:743px" width="140" height="20" viewBox="0 0 140 20">
<path d="M3 6 Q6 3 9 9 Q10 15 8 16 Q4 14 3 6Z" fill="#4A90D8"/><path d="M8 14 Q12 4 17 3 Q18 10 12 16Z" fill="#E86030"/><path d="M9 10 Q13 6 15 9 L11 15Z" fill="#F0C030"/>
<circle cx="34" cy="10" r="7.5" fill="#E86420"/><circle cx="35" cy="9" r="4.5" fill="#3050B0"/><path d="M27 10 Q28 3 35 2.5 Q30 6 33 9 Q31 13 36 17 Q28 17 27 10Z" fill="#F4A030"/>
<rect x="50" y="6" width="15" height="10" rx="1" fill="#F0E8C8" stroke="#806020" stroke-width="0.8"/><rect x="53" y="2" width="9" height="6" fill="#FFF" stroke="#888" stroke-width="0.6"/><path d="M52 12 h11" stroke="#C0A060"/>
<defs><radialGradient id="glb" cx="0.35" cy="0.3" r="0.7"><stop offset="0" stop-color="#A8E0FF"/><stop offset="0.5" stop-color="#2A8AD8"/><stop offset="1" stop-color="#0A3A80"/></radialGradient></defs><circle cx="80" cy="10" r="7.5" fill="url(#glb)" stroke="#0A2A60" stroke-width="0.6"/><path d="M75 8 Q78 5 82 6 Q80 9 83 12 Q79 14 76 11Z" fill="#3A9A50" opacity="0.8"/>
<path d="M101 3 a2.5 2.5 0 1 0 0.1 0Z" fill="#F0A010"/><path d="M100 7 L97 12 L94 17 L97 17 L100 13 L103 17 L106 16 L102 10 L104 8 L107 10 L108 8Z" fill="#F0A010" stroke="#201000" stroke-width="0.6"/>
<circle cx="125" cy="10" r="7" fill="#E8F0E0" stroke="#5A9A40"/><path d="M120 11 a5 5 0 0 0 9 1" stroke="#2A8040" stroke-width="2" fill="none"/><text x="125" y="10" font-size="8" font-family="Liberation Sans" fill="#3A7A30" font-weight="bold">5</text>
</svg>
<svg class="a" style="left:262px;top:742px" width="6" height="24"><g fill="#16329A"><rect x="1" y="1" width="2" height="2"/><rect x="3" y="4" width="2" height="2"/><rect x="1" y="7" width="2" height="2"/><rect x="3" y="10" width="2" height="2"/><rect x="1" y="13" width="2" height="2"/><rect x="3" y="16" width="2" height="2"/><rect x="1" y="19" width="2" height="2"/></g></svg>
<!-- task buttons -->
<div class="a" style="left:270px;top:742px;width:117px;height:24px;border-radius:3px;background:#1E4CC4;border:1px solid #1840A8;box-shadow:inset 1px 1px #16389A"></div>
<div class="a" style="left:389px;top:742px;width:117px;height:24px;border-radius:3px;background:linear-gradient(#4A8CF8,#3C80F0 20%,#3A7CEC 80%,#2A64D8);box-shadow:inset -1px -1px #2450C0"></div>
<div class="a" style="left:508px;top:742px;width:117px;height:24px;border-radius:3px;background:linear-gradient(#4A8CF8,#3C80F0 20%,#3A7CEC 80%,#2A64D8);box-shadow:inset -1px -1px #2450C0"></div>
<div class="a" style="left:627px;top:742px;width:117px;height:24px;border-radius:3px;background:linear-gradient(#4A8CF8,#3C80F0 20%,#3A7CEC 80%,#2A64D8);box-shadow:inset -1px -1px #2450C0"></div>
<div class="a" style="left:746px;top:742px;width:117px;height:24px;border-radius:3px;background:linear-gradient(#4A8CF8,#3C80F0 20%,#3A7CEC 80%,#2A64D8);box-shadow:inset -1px -1px #2450C0"></div>
<div class="t" style="left:301px;top:746px;color:#fff;font-size:11px;line-height:14px;letter-spacing:-0.2px">Adobe Photo...</div>
<div class="t" style="left:418px;top:746px;color:#fff;font-size:11px;line-height:14px;letter-spacing:-0.2px">garnet12685...</div>
<div class="t" style="left:536px;top:746px;color:#fff;font-size:11px;line-height:14px;letter-spacing:-0.2px">Bellazon -&gt; F...</div>
<div class="t" style="left:655px;top:746px;color:#fff;font-size:11px;line-height:14px;letter-spacing:-0.2px">BravesZebra...</div>
<div class="t" style="left:775px;top:746px;color:#fff;font-size:11px;line-height:14px;letter-spacing:-0.2px">tutorial on co...</div>
<svg class="a" style="left:281px;top:747px" width="15" height="15" viewBox="0 0 16 16"><rect x="0.5" y="0.5" width="15" height="15" rx="2" fill="#F4FAFF" stroke="#9CC8F0"/><path d="M2 2 Q7 3 10 8 L13 14 L11 13 Q6 9 2 2Z" fill="#30A088"/><path d="M2 2 L5 3 L3.5 5Z" fill="#3080D0"/></svg>
<svg class="a" style="left:398px;top:745px" width="17" height="18" viewBox="0 0 17 18"><circle cx="6" cy="3.5" r="2.8" fill="#F0A010" stroke="#201000" stroke-width="0.7"/><path d="M5 7 L2 12 L0.5 16 L3.5 16 L5.5 12 L8 16 L11 15 L7.5 10 L9 8 L11 9 L12 7Z" fill="#F0A010" stroke="#201000" stroke-width="0.7"/><rect x="11" y="1.5" width="5" height="8" fill="#fff" stroke="#333" stroke-width="0.8"/><path d="M12 4 h3 M12 6 h3" stroke="#333" stroke-width="0.8"/></svg>
<svg class="a" style="left:516px;top:746px" width="16" height="16"><circle cx="8" cy="8" r="7" fill="#E86420"/><circle cx="9" cy="7" r="4" fill="#2850B0"/><path d="M1.5 8 Q2 1.5 9 1 Q4 4 7 7 Q5 11 10 15 Q2 15 1.5 8Z" fill="#F4A030"/></svg>
<svg class="a" style="left:635px;top:745px" width="17" height="17"><path d="M3 4 Q3 1 7 1 L13 1 Q16 1 16 4 L16 7 Q16 9 13 9 L9 9 L6 12 L7 9 Q3 9 3 7Z" fill="#fff" stroke="#555" stroke-width="0.8"/><path d="M2 11 Q6 9 9 13 L7 16 Q3 16 2 11Z" fill="#E84040"/></svg>
<svg class="a" style="left:756px;top:745px" width="16" height="17"><path d="M3 2 L5 15 L11 15 L13 2Z" fill="#C8A060" stroke="#604010" stroke-width="0.8"/><path d="M4 4 L6 2 L8 5 L10 2 L12 4" stroke="#D03030" stroke-width="1.5" fill="none"/><path d="M6 8 v5 M8 8 v5 M10 8 v5" stroke="#604010" stroke-width="0.8"/></svg>
<!-- tray -->
<div class="a" style="left:876px;top:737px;width:148px;height:31px;background:linear-gradient(#18B0F0 0px,#0C9CEC 3px,#0A8CE4 20px,#0A84DA 31px);border-left:1px solid #0A4AB0;box-shadow:inset 1px 0 #38B8F8"></div>
<svg class="a" style="left:867px;top:744px" width="20" height="18"><circle cx="9.5" cy="9" r="8" fill="#3C8CF0" stroke="#D8E8FF" stroke-width="1"/><path d="M11 5 L7.5 9 L11 13" stroke="#fff" stroke-width="2" fill="none"/></svg>
<svg class="a" style="left:887px;top:744px" width="75" height="18" viewBox="0 0 75 18">
<circle cx="9" cy="9" r="8" fill="none" stroke="#60B0F0" stroke-width="0.8"/><circle cx="9" cy="3.5" r="2.5" fill="#F0A010" stroke="#201000" stroke-width="0.6"/><path d="M8 6 L5 11 L3.5 15 L6 15 L8 11 L10.5 15 L13 14 L10 9 L11.5 7 L13.5 8.5 L14.5 6.5Z" fill="#F0A010" stroke="#201000" stroke-width="0.6"/>
<circle cx="25" cy="7.5" r="5" fill="#8890A0" stroke="#303848"/><circle cx="25" cy="7.5" r="2.3" fill="#202830"/><path d="M24 15 Q28 14 31 10" stroke="#C8D8F8" stroke-width="1" fill="none"/>
<circle cx="43" cy="4" r="3" fill="#7A98C0"/><path d="M37 16 Q38 8 43 8 Q48 8 49 16Z" fill="#40A8B0"/><path d="M46 16 L47 10 L51 10 L52 16Z" fill="#E86030"/>
<path d="M56 5 Q60 2 63 8 Q64 14 62 16 Q57 13 56 5Z" fill="#3C8CE0"/><path d="M62 14 Q65 4 71 3 Q72 10 66 16Z" fill="#E86030"/><path d="M63 10 Q67 6 69 9 L65 15Z" fill="#F0C030"/>
</svg>
<div class="t" style="left:968px;top:746px;color:#fff;line-height:14px;letter-spacing:-0.4px">5:09 PM</div>

</body></html>
